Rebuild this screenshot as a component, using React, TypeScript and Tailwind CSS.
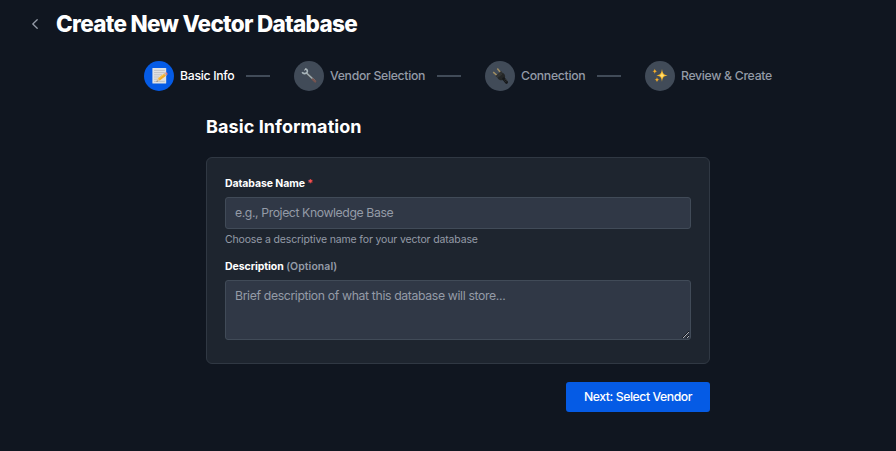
import type { ReactNode } from 'react';

function MemoIcon() {
  return (
    <svg width="18" height="18" viewBox="0 0 18 18" aria-hidden="true">
      <rect x="2.4" y="1" width="13.8" height="15.6" rx="0.6" fill="#e0e2e2" />
      <path d="M4 3.4h10.8M4 5.6h10.8M4 7.8h8M4 10h5.4M4 12.2h3.6M4 14.4h10.8" stroke="#b1b5ba" strokeWidth="0.7" />
      <path d="M6.5 14.8l1.2-3.2 2.1 2z" fill="#e8c795" />
      <path d="M6.5 14.8l.5-1.2.8.7z" fill="#444" />
      <path d="M7.7 11.6l6.7-5.3 1.9 2.3-6.5 5z" fill="#f4ad26" />
      <path d="M8.1 11.9l6.8-5.2" stroke="#ffd45e" strokeWidth="0.7" />
      <path d="M14 6.7l1-.8 1.9 2.3-1 .8z" fill="#b9bdc2" />
      <path d="M15 5.9l.7-.5c1-.5 2.2 1.1 1.8 2.1l-.7.7z" fill="#e77d78" />
    </svg>
  );
}

function WrenchIcon() {
  return (
    <svg width="18" height="18" viewBox="0 0 18 18" aria-hidden="true">
      <path d="M7 6.5l8.2 7.7" stroke="#4c4e50" strokeWidth="2.6" strokeLinecap="round" />
      <path d="M6.5 6l8 7.5" stroke="#9eabb1" strokeWidth="1.7" strokeLinecap="round" />
      <path d="M12.8 12.3l2.4 2.2" stroke="#765451" strokeWidth="2.2" strokeLinecap="round" />
      <path d="M5.3 1.8c2 .5 2.6 2.3 1.6 3.8-1.2 1.6-3.7 1.5-4.7-.4" fill="none" stroke="#a9b6bb" strokeWidth="1.7" />
      <path d="M5.5 1.7L4.7 3.5" stroke="#ced5d7" strokeWidth="1" />
    </svg>
  );
}

function PlugIcon() {
  return (
    <svg width="18" height="18" viewBox="0 0 18 18" aria-hidden="true">
      <path d="M2.2 5.1l4.2 3.7M6.3 1.5l3.4 4.2" stroke="#a08e62" strokeWidth="1.5" />
      <path d="M10.1 4.1l1.1 1.2-5.7 5-1-1.2z" fill="#303130" />
      <path d="M10.8 5.4c2.6.7 3.8 3 3.2 5.5l-2.5 2.3c-2.4.2-4.7-.8-5.3-3.3z" fill="#242626" />
      <path d="M7.3 9.9l4-3.5" stroke="#454744" strokeWidth="0.7" />
      <path d="M12.7 11.8l2.8 3.5" stroke="#17191b" strokeWidth="3" strokeLinecap="round" />
      <path d="M13.2 13.4l2.5-1.8M14.2 14.7l2.2-1.6" stroke="#454849" strokeWidth="0.5" />
    </svg>
  );
}

function SparklesIcon() {
  return (
    <svg width="18" height="18" viewBox="0 0 18 18" aria-hidden="true">
      <path d="M11 2c.7 4.5 1.3 5.6 5.6 6.4-4.3.7-4.9 1.8-5.6 6.3-.7-4.5-1.3-5.6-5.6-6.3C9.7 7.6 10.3 6.5 11 2z" fill="#f9b929" />
      <path d="M11 5c.4 2.3.7 3 2.8 3.4-2.1.3-2.4 1-2.8 3.3-.4-2.3-.7-3-2.8-3.3 2.1-.4 2.4-1.1 2.8-3.4z" fill="#ffe079" />
      <path d="M3.8 1.7c.4 1.6.8 2.1 2.5 2.5-1.7.4-2.1.9-2.5 2.5-.4-1.6-.8-2.1-2.5-2.5 1.7-.4 2.1-.9 2.5-2.5zM6 10.3c.4 1.6.8 2.1 2.5 2.5-1.7.4-2.1.9-2.5 2.5-.4-1.6-.8-2.1-2.5-2.5 1.7-.4 2.1-.9 2.5-2.5z" fill="#f7ae29" />
    </svg>
  );
}

function Step({ label, icon, active = false }: { label: string; icon: ReactNode; active?: boolean }) {
  return (
    <div className="flex items-center gap-1.5">
      <span className={`flex size-[30px] shrink-0 items-center justify-center rounded-full ${active ? 'bg-[#055be5]' : 'bg-[#414b58]'}`}>{icon}</span>
      <span className={`whitespace-nowrap text-[12.25px] font-medium tracking-[-0.31px] ${active ? 'text-white' : 'text-[#949ba7]'}`}>{label}</span>
    </div>
  );
}

function Connector() {
  return <div className="mx-3 h-[2px] w-6 shrink-0 bg-[#414b58]" />;
}

export default function App() {
  return (
    <main className="h-[451px] w-[896px] overflow-hidden bg-[#101620] font-['Inter','Liberation_Sans',sans-serif] text-white">
      <header className="flex h-12 items-center pl-7">
        <button aria-label="Go back" className="mr-[14px] flex size-[14px] items-center justify-center text-[#949ba7]">
          <svg width="14" height="14" viewBox="0 0 14 14" fill="none" stroke="currentColor" strokeWidth="1.3" strokeLinecap="round" strokeLinejoin="round"><path d="M9.2 2.7L4.8 7l4.4 4.3" /></svg>
        </button>
        <h1 className="whitespace-nowrap text-[22.5px] font-extrabold leading-7 tracking-[-0.7px]">Create New Vector Database</h1>
      </header>
      <nav aria-label="Progress" className="mt-[13px] flex h-[30px] items-center pl-36">
        <div className="flex w-[150px] items-center"><Step label="Basic Info" icon={<MemoIcon />} active /><Connector /></div>
        <div className="flex w-[191px] items-center"><Step label="Vendor Selection" icon={<WrenchIcon />} /><Connector /></div>
        <div className="flex w-[160px] items-center"><Step label="Connection" icon={<PlugIcon />} /><Connector /></div>
        <Step label="Review & Create" icon={<SparklesIcon />} />
      </nav>
      <section className="ml-[206px] mt-6 w-[504px]">
        <h2 className="h-6 text-[18px] font-bold leading-6 tracking-[0.08px]">Basic Information</h2>
        <form className="mt-[18px] h-[207px] rounded-md border border-[#303843] bg-[#1e252f] px-[18px] pt-[18px]">
          <label htmlFor="name" className="block h-4 text-[10.5px] font-bold leading-4 tracking-[-0.09px]">Database Name <span className="text-[#f65358]">*</span></label>
          <input id="name" placeholder="e.g., Project Knowledge Base" className="mt-[5px] block h-8 w-full rounded-[3px] border border-[#414b58] bg-[#303846] px-[9px] pb-[2px] text-[12.25px] tracking-[-0.41px] placeholder:text-[#949ba7] placeholder:opacity-100" />
          <p className="mt-[3px] h-4 text-[10.5px] leading-4 tracking-[-0.15px] text-[#949ba7]">Choose a descriptive name for your vector database</p>
          <label htmlFor="description" className="mt-[11px] block h-4 text-[10.5px] font-bold leading-4 tracking-[-0.06px]">Description <span className="font-semibold tracking-[0.05px] text-[#949ba7]">(Optional)</span></label>
          <textarea id="description" placeholder="Brief description of what this database will store..." className="mt-[5px] block h-[60px] w-full resize-y rounded-[3px] border border-[#414b58] bg-[#303846] px-[9px] py-[6px] text-[12.25px] leading-[18px] tracking-[-0.36px] placeholder:text-[#949ba7] placeholder:opacity-100" />
        </form>
        <div className="mt-[18px] flex justify-end">
          <button className="h-[30px] w-36 rounded-[3px] bg-[#055be5] text-[12.25px] font-medium tracking-[-0.45px]">Next: Select Vendor</button>
        </div>
      </section>
    </main>
  );
}
